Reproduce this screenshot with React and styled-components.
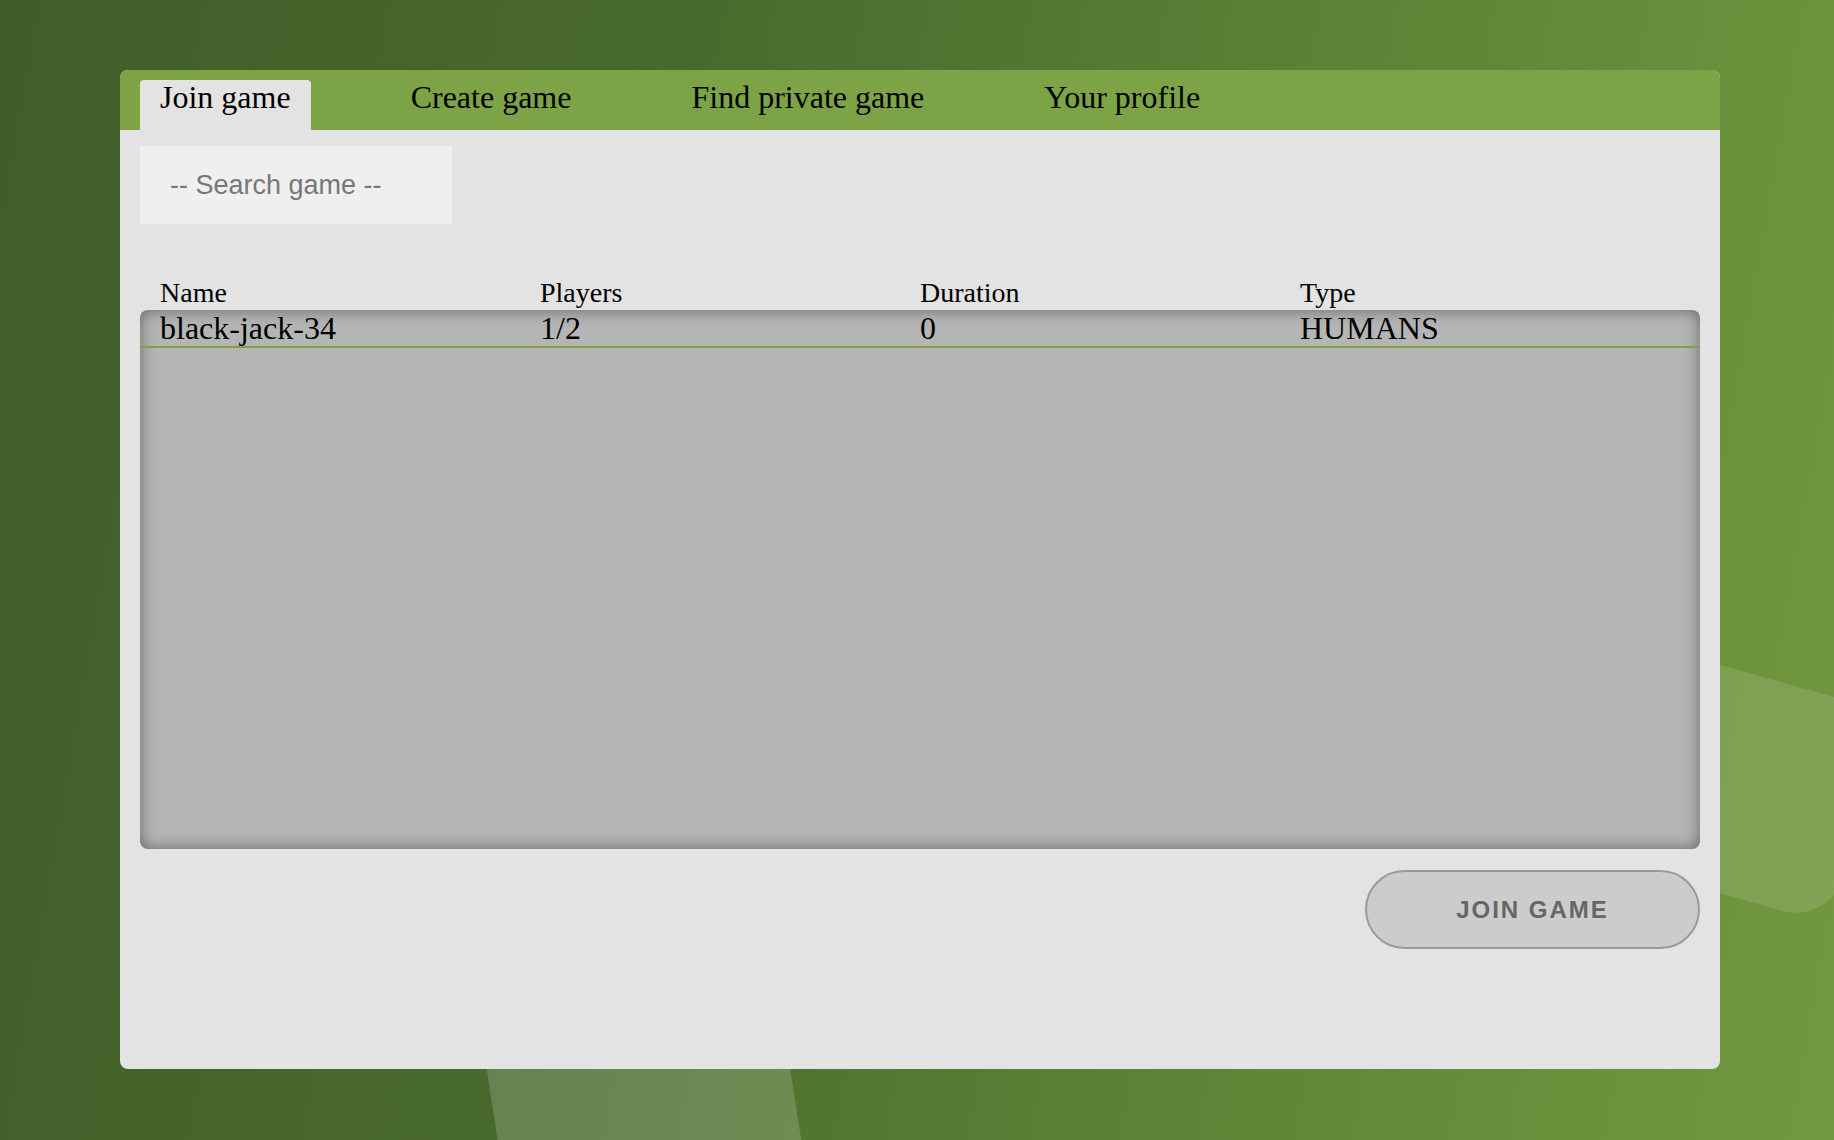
import React from "react";
import styled, { createGlobalStyle } from "styled-components";

const GlobalStyle = createGlobalStyle`
  html, body { margin: 0; padding: 0; }
  body { font-family: "Liberation Serif", "Times New Roman", serif; }
  * { box-sizing: border-box; }
`;

const Page = styled.div`
  position: relative;
  width: 100vw;
  height: 100vh;
  overflow: hidden;
  background: linear-gradient(100deg, #3f5e29 0%, #496a2e 35%, #5d8436 68%, #72993f 100%);
  padding: 70px 0 0 120px;
`;

const Decor = styled.div`
  position: absolute;
  transform-origin: top left;
  pointer-events: none;
`;

const BottomBand = styled(Decor)`
  left: 445px;
  top: 800px;
  width: 300px;
  height: 520px;
  background: rgba(255, 255, 255, 0.17);
  transform: rotate(-8.8deg);
`;

const RightBand = styled(Decor)`
  left: 1500px;
  top: 603px;
  width: 405px;
  height: 220px;
  border-radius: 50px;
  background: rgba(255, 255, 255, 0.12);
  transform: rotate(15.7deg);
`;

const Panel = styled.div`
  position: relative;
  z-index: 1;
  width: 1600px;
  height: 999px;
  background: #e3e3e3;
  border-radius: 8px;
  overflow: hidden;
  display: flex;
  flex-direction: column;
`;

const TabBar = styled.nav`
  height: 60px;
  background: #7ca346;
  display: flex;
  align-items: flex-end;
  gap: 80px;
  padding: 10px 0 0 20px;
`;

const Tab = styled.div`
  height: 50px;
  padding: 0 20px;
  font-family: "Liberation Serif", "Times New Roman", serif;
  font-size: 32px;
  line-height: 34px;
  color: #000;
  border-radius: 4px 4px 0 0;
  background: ${(p) => (p.$active ? "#e3e3e3" : "transparent")};
  white-space: nowrap;
`;

const Body = styled.div`
  flex: 1;
  display: flex;
  flex-direction: column;
  padding: 16px 20px 20px;
`;

const SearchInput = styled.input`
  width: 312px;
  height: 78px;
  border: none;
  outline: none;
  background: #efefef;
  padding: 0 0 0 30px;
  font-family: "Liberation Sans", Arial, Helvetica, sans-serif;
  font-size: 27px;
  color: #333;
  &::placeholder { color: #777777; }
`;

const Columns = styled.div`
  display: grid;
  grid-template-columns: repeat(4, 1fr);
  padding: 0 20px;
`;

const HeadRow = styled(Columns)`
  margin-top: 52px;
  font-size: 28px;
  line-height: 34px;
  color: #000;
`;

const TableBox = styled.div`
  height: 539px;
  background: #b5b5b5;
  border-radius: 8px;
  box-shadow: inset 0 0 16px rgba(0, 0, 0, 0.45);
  overflow: hidden;
`;

const DataRow = styled(Columns)`
  font-size: 32px;
  line-height: 36px;
  color: #000;
  border-bottom: 2px solid #7ba346;
`;

const Footer = styled.div`
  display: flex;
  justify-content: flex-end;
  margin-top: 21px;
`;

const JoinButton = styled.button`
  width: 335px;
  height: 79px;
  border: 2px solid #9a9a9a;
  border-radius: 40px;
  background: #cccccc;
  color: #666666;
  font-family: "Liberation Sans", Arial, Helvetica, sans-serif;
  font-weight: bold;
  font-size: 24px;
  letter-spacing: 2px;
  cursor: pointer;
`;

const tabs = ["Join game", "Create game", "Find private game", "Your profile"];
const columns = ["Name", "Players", "Duration", "Type"];
const games = [{ name: "black-jack-34", players: "1/2", duration: "0", type: "HUMANS" }];

export default function App() {
  return (
    <>
      <GlobalStyle />
      <Page>
        <BottomBand />
        <RightBand />
        <Panel>
          <TabBar>
            {tabs.map((t, i) => (
              <Tab key={t} $active={i === 0}>{t}</Tab>
            ))}
          </TabBar>
          <Body>
            <SearchInput placeholder="-- Search game --" />
            <HeadRow>
              {columns.map((c) => (
                <div key={c}>{c}</div>
              ))}
            </HeadRow>
            <TableBox>
              {games.map((g) => (
                <DataRow key={g.name}>
                  <div>{g.name}</div>
                  <div>{g.players}</div>
                  <div>{g.duration}</div>
                  <div>{g.type}</div>
                </DataRow>
              ))}
            </TableBox>
            <Footer>
              <JoinButton>JOIN GAME</JoinButton>
            </Footer>
          </Body>
        </Panel>
      </Page>
    </>
  );
}
